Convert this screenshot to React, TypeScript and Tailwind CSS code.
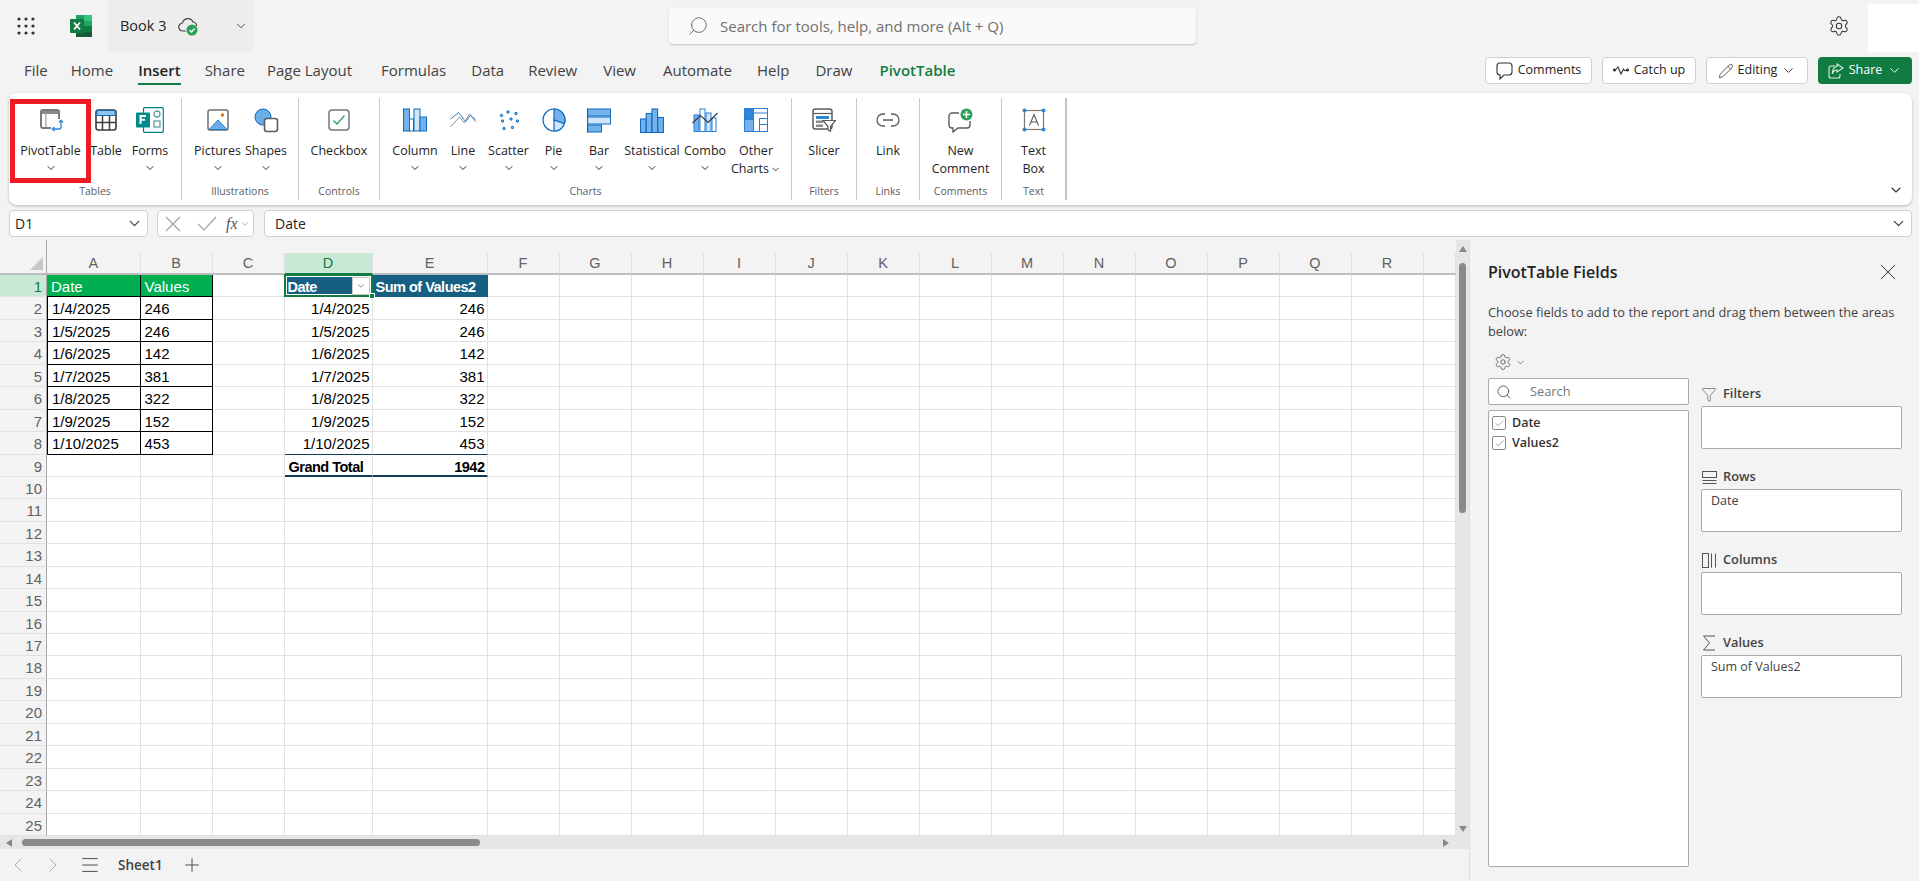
import React from "react";
import { ChevronDown, ChevronLeft, ChevronRight, Menu, Plus, Search, Settings, X, Check, Funnel, Pencil } from "lucide-react";

const blue = "#0f6cbd";
const lite = "#73b2ea";
const pale = "#cfe6fa";

const PivotIcon = () => (
  <svg width="26" height="26" viewBox="0 0 26 26" fill="none">
    <rect x="3" y="3" width="18" height="18" rx="2" stroke="#7a7a7a" strokeWidth="2" fill="#fff" />
    <rect x="4" y="4" width="16" height="3" fill="#8c8c8c" />
    <rect x="7" y="7" width="1.6" height="13" fill="#b5b5b5" />
    <rect x="13" y="12" width="13" height="14" fill="#fff" />
    <path d="M23 13.5v6.5a2 2 0 0 1-2 2h-6.5M21 15.5l2-2.2 2 2.2M16.5 20l-2.2 2 2.2 2" stroke="#2b88d8" strokeWidth="1.3" />
  </svg>
);
const TableIcon = () => (
  <svg width="22" height="22" viewBox="0 0 22 22" fill="none">
    <rect x="1" y="1" width="20" height="20" rx="2.5" fill="#fff" stroke="#3d3d3d" strokeWidth="1.6" />
    <path d="M1.8 2.5a1 1 0 0 1 1-1h16.4a1 1 0 0 1 1 1v4H1.8z" fill="#8fc3f0" stroke={blue} strokeWidth="1" />
    <path d="M1 13.5h20M7.5 7v14M14.5 7v14" stroke="#3d3d3d" strokeWidth="1.5" />
  </svg>
);
const FormsIcon = () => (
  <svg width="28" height="26" viewBox="0 0 28 26">
    <rect x="7.5" y="0.7" width="19.8" height="24.6" rx="1" fill="#fff" stroke="#038387" strokeWidth="1.2" />
    <circle cx="21" cy="7" r="3" fill="#fff" stroke="#5f9ea0" strokeWidth="1.3" />
    <rect x="18" y="14" width="6" height="6" fill="#fff" stroke="#5f9ea0" strokeWidth="1.3" />
    <rect x="0" y="5.5" width="14" height="15" rx="1" fill="#058a8c" />
    <path d="M4.5 17V9h5.5M4.5 12.8h4.5" stroke="#fff" strokeWidth="2" fill="none" />
  </svg>
);
const PicturesIcon = () => (
  <svg width="22" height="22" viewBox="0 0 22 22">
    <rect x="1" y="1" width="20" height="20" rx="2" fill="#fff" stroke="#6f6f6f" strokeWidth="1.5" />
    <path d="M2 20.5 11 11l9 9.5z" fill="#6aaee8" stroke={blue} strokeWidth="0.8" />
    <circle cx="15.5" cy="6" r="1.7" fill="#e8730c" />
  </svg>
);
const ShapesIcon = () => (
  <svg width="25" height="25" viewBox="0 0 25 25">
    <circle cx="9" cy="9" r="8" fill="#6aaee8" stroke={blue} strokeWidth="1" />
    <rect x="10.5" y="10.5" width="13" height="13" rx="2.5" fill="#fff" stroke="#5c5c5c" strokeWidth="1.6" />
  </svg>
);
const CheckboxIcon = () => (
  <svg width="22" height="22" viewBox="0 0 22 22" fill="none">
    <rect x="1" y="1" width="20" height="20" rx="3" fill="#fff" stroke="#757575" strokeWidth="1.5" />
    <path d="m5.5 11.5 3.5 3.5 7.5-8.5" stroke="#2aa05a" strokeWidth="1.2" />
  </svg>
);
const ColumnIcon = () => (
  <svg width="24" height="24" viewBox="0 0 24 24" stroke={blue} strokeWidth="1">
    <rect x="0.5" y="1" width="6" height="22" fill={lite} />
    <rect x="6.5" y="11" width="4" height="12" fill="#fff" />
    <rect x="11" y="1" width="6" height="22" fill={pale} />
    <rect x="17" y="9" width="6.5" height="14" fill={lite} />
  </svg>
);
const LineIcon = () => (
  <svg width="26" height="18" viewBox="0 0 26 18" fill="none">
    <path d="m0.5 16 9-10 5 6 5-9 6.5 8" stroke="#8a8a8a" strokeWidth="1" />
    <path d="m0.5 8 8-6.5 7 9 5-6 5 4" stroke={blue} strokeWidth="0.9" />
  </svg>
);
const ScatterIcon = () => (
  <svg width="20" height="22" viewBox="0 0 20 22" fill={lite} stroke={blue} strokeWidth="1">
    {[[2.5, 6.5], [9, 3], [17, 4.5], [12, 10], [3.5, 12], [18.5, 12], [5, 19.5], [13.5, 18.5]].map(([x, y]) => (
      <circle key={`${x}-${y}`} cx={x} cy={y} r="1.2" />
    ))}
  </svg>
);
const PieIcon = () => (
  <svg width="24" height="24" viewBox="0 0 24 24" stroke={blue} strokeWidth="1.2">
    <circle cx="12" cy="12" r="11" fill="#fff" />
    <path d="M12 1a11 11 0 0 1 10.3 14.7L12 12z" fill={lite} />
    <path d="m12 12 10.3 3.7A11 11 0 0 1 12 23z" fill={pale} />
  </svg>
);
const BarIcon = () => (
  <svg width="24" height="25" viewBox="0 0 24 25" stroke={blue} strokeWidth="1">
    <rect x="0.5" y="1" width="23" height="7" fill={lite} />
    <rect x="0.5" y="9" width="23" height="7" fill={pale} />
    <rect x="0.5" y="17" width="14" height="7" fill={lite} />
    <path d="M0.5 0.5v24" strokeWidth="1.4" />
  </svg>
);
const StatisticalIcon = () => (
  <svg width="24" height="25" viewBox="0 0 24 25" stroke={blue} strokeWidth="1.1">
    <rect x="0.5" y="11" width="5.6" height="13.5" fill={lite} />
    <rect x="6.2" y="5.5" width="5.6" height="19" fill={lite} />
    <rect x="12" y="1" width="5.6" height="23.5" fill={lite} />
    <rect x="17.8" y="9.5" width="5.6" height="15" fill={lite} />
  </svg>
);
const ComboIcon = () => (
  <svg width="26" height="24" viewBox="0 0 26 24" fill="none">
    <g stroke="#2b7cd3" strokeWidth="1">
      <rect x="2" y="7" width="5" height="16.5" fill={lite} />
      <rect x="8" y="1" width="5" height="22.5" fill="#fff" />
      <rect x="14" y="5" width="5" height="18.5" fill={pale} />
      <rect x="20" y="10" width="4" height="13.5" fill="#fff" />
    </g>
    <path d="m0.5 15 8-7.5 7.5 7 9.5-9.5" stroke="#3a3a3a" strokeWidth="1.1" />
  </svg>
);
const OtherIcon = () => (
  <svg width="24" height="24" viewBox="0 0 24 24" stroke="#2b7cd3" strokeWidth="1">
    <rect x="0.5" y="0.5" width="23" height="23" fill="#fff" />
    <rect x="0.5" y="0.5" width="9" height="11" fill="#2b88d8" />
    <rect x="0.5" y="11.5" width="9" height="12" fill={lite} />
    <path d="M9.5 5h14M15.5 10.5h8M15.5 10.5V23.5M15.5 16.5h8" />
  </svg>
);
const SlicerIcon = () => (
  <svg width="24" height="24" viewBox="0 0 24 24">
    <rect x="1" y="1" width="19" height="20" rx="2.5" fill="#fff" stroke="#5c5c5c" strokeWidth="1.5" />
    <path d="M1 5.5h19" stroke="#5c5c5c" strokeWidth="1.2" />
    <rect x="4" y="8" width="13" height="3" fill="#2b88d8" />
    <rect x="4" y="12.5" width="7" height="2.5" fill="#8a8a8a" />
    <rect x="4" y="16.5" width="7" height="2.5" fill="#8a8a8a" />
    <path d="M11 12.5h12.5l-5 6v5l-2.5-1.5v-3.5z" fill="#fff" stroke="#5c5c5c" strokeWidth="1.2" />
  </svg>
);
const LinkIcon = () => (
  <svg width="24" height="14" viewBox="0 0 24 14" fill="none" stroke="#5c5c5c" strokeWidth="1.3">
    <path d="M9 1H7a6 6 0 0 0 0 12h2M15 1h2a6 6 0 0 1 0 12h-2M7 7h10" />
  </svg>
);
const NewCommentIcon = () => (
  <svg width="25" height="25" viewBox="0 0 25 25" fill="none">
    <path d="M11 5H4a3 3 0 0 0-3 3v9a3 3 0 0 0 3 3h1v4l5-4h9a3 3 0 0 0 3-3v-4" stroke="#5c5c5c" strokeWidth="1.4" />
    <circle cx="18.5" cy="6.5" r="6" fill="#2aa05a" />
    <path d="M18.5 3v7M15 6.5h7" stroke="#fff" strokeWidth="1.5" />
  </svg>
);
const TextBoxIcon = () => (
  <svg width="24" height="24" viewBox="0 0 24 24" fill="none">
    <rect x="2.5" y="2.5" width="19" height="19" stroke="#7a7a7a" strokeWidth="1.2" />
    <path d="m7.5 17.5 4.5-11 4.5 11M9 14h6" stroke="#5c5c5c" strokeWidth="1.1" />
    {[[2.5, 2.5], [21.5, 2.5], [2.5, 21.5], [21.5, 21.5]].map(([x, y]) => (
      <circle key={`${x}-${y}`} cx={x} cy={y} r="2" fill="#2b88d8" />
    ))}
  </svg>
);

type RibbonItem = { w: string; lines: string[]; icon: React.ReactNode; chev?: boolean; inlineChev?: boolean };
type RibbonGroup = { label: string; w: string; cls: string; items: RibbonItem[] };

const groups: RibbonGroup[] = [
  {
    label: "Tables",
    w: "w-[173px]",
    cls: "pl-[5px]",
    items: [
      { w: "w-[73px]", lines: ["PivotTable"], icon: <PivotIcon />, chev: true },
      { w: "w-[38px]", lines: ["Table"], icon: <TableIcon /> },
      { w: "w-[50px]", lines: ["Forms"], icon: <FormsIcon />, chev: true },
    ],
  },
  {
    label: "Illustrations",
    w: "w-[117px]",
    cls: "pl-[8px]",
    items: [
      { w: "w-[55px]", lines: ["Pictures"], icon: <PicturesIcon />, chev: true },
      { w: "w-[42px]", lines: ["Shapes"], icon: <ShapesIcon />, chev: true },
    ],
  },
  { label: "Controls", w: "w-[81px]", cls: "justify-center", items: [{ w: "w-[70px]", lines: ["Checkbox"], icon: <CheckboxIcon /> }] },
  {
    label: "Charts",
    w: "w-[412px]",
    cls: "pl-[5px]",
    items: [
      { w: "w-[60px]", lines: ["Column"], icon: <ColumnIcon />, chev: true },
      { w: "w-[36px]", lines: ["Line"], icon: <LineIcon />, chev: true },
      { w: "w-[55px]", lines: ["Scatter"], icon: <ScatterIcon />, chev: true },
      { w: "w-[35px]", lines: ["Pie"], icon: <PieIcon />, chev: true },
      { w: "w-[56px]", lines: ["Bar"], icon: <BarIcon />, chev: true },
      { w: "w-[50px]", lines: ["Statistical"], icon: <StatisticalIcon />, chev: true },
      { w: "w-[56px]", lines: ["Combo"], icon: <ComboIcon />, chev: true },
      { w: "w-[46px]", lines: ["Other", "Charts"], icon: <OtherIcon />, inlineChev: true },
    ],
  },
  { label: "Filters", w: "w-[65px]", cls: "justify-center", items: [{ w: "w-[50px]", lines: ["Slicer"], icon: <SlicerIcon /> }] },
  { label: "Links", w: "w-[63px]", cls: "justify-center", items: [{ w: "w-[50px]", lines: ["Link"], icon: <LinkIcon /> }] },
  { label: "Comments", w: "w-[82px]", cls: "justify-center", items: [{ w: "w-[70px]", lines: ["New", "Comment"], icon: <NewCommentIcon /> }] },
  { label: "Text", w: "w-[65px]", cls: "justify-center", items: [{ w: "w-[50px]", lines: ["Text", "Box"], icon: <TextBoxIcon /> }] },
];

const tabs = [
  { name: "File", ml: "" },
  { name: "Home", ml: "ml-[23px]" },
  { name: "Insert", ml: "ml-[25px]" },
  { name: "Share", ml: "ml-[24px]" },
  { name: "Page Layout", ml: "ml-[22px]" },
  { name: "Formulas", ml: "ml-[29px]" },
  { name: "Data", ml: "ml-[25px]" },
  { name: "Review", ml: "ml-[24px]" },
  { name: "View", ml: "ml-[26px]" },
  { name: "Automate", ml: "ml-[27px]" },
  { name: "Help", ml: "ml-[25px]" },
  { name: "Draw", ml: "ml-[26px]" },
  { name: "PivotTable", ml: "ml-[27px]" },
];

// column widths of the sheet, first one is A
const columns = [
  { name: "A", w: "w-[93.5px]" },
  { name: "B", w: "w-[72px]" },
  { name: "C", w: "w-[72px]" },
  { name: "D", w: "w-[88px]" },
  { name: "E", w: "w-[115px]" },
  ...["F", "G", "H", "I", "J", "K", "L", "M", "N", "O", "P", "Q", "R"].map((name) => ({ name, w: "w-[72px]" })),
  { name: "", w: "w-[32.5px]" },
];

const source: [string, string][] = [
  ["1/4/2025", "246"],
  ["1/5/2025", "246"],
  ["1/6/2025", "142"],
  ["1/7/2025", "381"],
  ["1/8/2025", "322"],
  ["1/9/2025", "152"],
  ["1/10/2025", "453"],
];

const cellBase = "h-full shrink-0 border-r border-b border-[#e1e1e1] px-[4px] leading-[24px] whitespace-nowrap";

function cellFor(col: string, row: number): { text?: string; cls: string } {
  if (col === "A" || col === "B") {
    const i = col === "A" ? 0 : 1;
    if (row === 1) return { text: col === "A" ? "Date" : "Values", cls: "bg-[#00b050] text-white border-r-black border-b-black" };
    if (row <= 8) return { text: source[row - 2][i], cls: "text-black border-r-black border-b-black" };
  }
  if (col === "D" || col === "E") {
    if (row === 1) return { text: col === "D" ? "Date" : "Sum of Values2", cls: "bg-[#156082] text-white font-bold text-[14.5px] tracking-[-0.5px] border-r-[#156082] border-b-[#156082] !px-[3px]" };
    if (row <= 8) {
      const i = col === "D" ? 0 : 1;
      return {
        text: source[row - 2][i],
        cls: `text-black text-right !pr-[2px] ${row === 8 ? "border-b-[#0e3f56]" : ""}`,
      };
    }
    if (row === 9) {
      return {
        text: col === "D" ? "Grand Total" : "1942",
        cls: `text-black font-bold text-[14.5px] tracking-[-0.5px] border-b-2 border-b-[#0e3f56] !pr-[2px] ${col === "E" ? "text-right" : ""}`,
      };
    }
  }
  return { cls: "" };
}

const RibbonButton = ({ item }: { item: RibbonItem }) => (
  <div className={`${item.w} flex flex-col items-center shrink-0`}>
    <div className="h-[28px] flex items-center justify-center">{item.icon}</div>
    <div className="mt-[8px] text-[12.5px] leading-[18px] text-[#242424] text-center whitespace-nowrap">
      {item.lines.map((line, i) => (
        <div key={line} className="flex items-center justify-center gap-[1px]">
          {line}
          {item.inlineChev && i === 1 && <ChevronDown size={11} strokeWidth={2} className="text-[#333]" />}
        </div>
      ))}
    </div>
    {item.chev && <ChevronDown size={12} strokeWidth={2} className="mt-[2px] text-[#333]" />}
  </div>
);

const Ribbon = () => (
  <div className="relative ml-[9px] mr-[7px] h-[112px] bg-white rounded-lg shadow-[0_1px_3px_rgba(0,0,0,0.25)] flex py-[5px]">
    {groups.map((g, i) => (
      <div key={g.label} className={`${g.w} flex flex-col shrink-0 ${i === groups.length - 1 ? "border-r-2 border-[#c4c4c4]" : "border-r border-[#c9c9c9]"}`}>
        <div className={`h-[84px] pt-[8px] flex ${g.cls}`}>
          {g.items.map((item) => (
            <RibbonButton key={item.lines.join(" ")} item={item} />
          ))}
        </div>
        <div className="text-[10.5px] leading-[18px] text-[#5c5c5c] text-center">{g.label}</div>
      </div>
    ))}
    <ChevronDown size={16} strokeWidth={1.6} className="absolute right-[8px] bottom-[7px] text-[#333]" />
    {/* red callout round the PivotTable button */}
    <div className="absolute left-[1px] top-[6px] w-[81px] h-[84px] border-[5px] border-[#ed1c24]" />
  </div>
);

const Sheet = () => (
  <div className="h-[596px] overflow-hidden bg-white font-['Liberation_Sans',sans-serif] text-[15px]">
    <div className="h-[35px] flex bg-[#f3f3f3]">
      <div className="relative w-[47px] shrink-0 border-r border-b-2 border-[#a8a8a8] border-b-[#bdbdbd]">
        <div className="absolute right-[3px] bottom-[3px] w-0 h-0 border-l-[13px] border-l-transparent border-b-[13px] border-b-[#c8c8c8]" />
      </div>
      {columns.map((c) => (
        <div key={c.name || "end"} className={`${c.w} shrink-0 h-[35px] pt-[13px]`}>
          <div
            className={`h-[22px] text-center text-[14.5px] leading-[21px] border-r border-b-2 border-r-[#e1e1e1] ${
              c.name === "D" ? "bg-[#c9e9d6] text-[#107c41] border-b-[#107c41]" : "text-[#616161] border-b-[#bdbdbd]"
            }`}
          >
            {c.name}
          </div>
        </div>
      ))}
    </div>
    {Array.from({ length: 25 }, (_, idx) => idx + 1).map((row) => (
      <div key={row} className="h-[22.44px] flex">
        <div
          className={`w-[47px] shrink-0 h-full border-r border-r-[#a8a8a8] border-b border-b-[#e1e1e1] text-right pr-[4px] leading-[24px] ${
            row === 1 ? "bg-[#c9e9d6] text-[#107c41]" : "bg-[#f3f3f3] text-[#616161]"
          }`}
        >
          {row}
        </div>
        {columns.map((c) => {
          const cell = cellFor(c.name, row);
          return (
            <div key={c.name || "end"} className={`relative ${c.w} ${cellBase} ${cell.cls} ${c.name === "A" && row <= 8 && row > 1 ? "border-l border-l-black" : ""}`}>
              {cell.text}
              {c.name === "D" && row === 1 && (
                <div className="absolute z-10 -left-px -top-px -right-px -bottom-px border-2 border-[#107c41]">
                  <div className="w-full h-full border border-white" />
                  <div className="absolute right-[1px] top-[1px] w-[18px] h-[18px] bg-white border border-[#c8c8c8] flex items-center justify-center">
                    <ChevronDown size={10} className="text-[#757575]" />
                  </div>
                  <div className="absolute -right-[4px] -bottom-[4px] w-[6px] h-[6px] bg-[#107c41] border border-white" />
                </div>
              )}
            </div>
          );
        })}
      </div>
    ))}
  </div>
);

const FieldArea = ({ icon, label, value }: { icon: React.ReactNode; label: string; value?: string }) => (
  <div>
    <div className="h-[24px] flex items-center gap-[6px]">
      <div className="w-[16px] h-[16px] flex items-center justify-center text-[#555]">{icon}</div>
      <span className="text-[12.8px] font-semibold text-[#424242]">{label}</span>
    </div>
    <div className="h-[43px] bg-white border border-[#aaaaaa] rounded-[2px] pl-[9px] text-[12.5px] leading-[21px] text-[#424242]">{value}</div>
  </div>
);

const FieldRow = ({ label }: { label: string }) => (
  <div className="h-[20px] flex items-center gap-[6px] pl-[3px]">
    <div className="w-[14px] h-[14px] border border-[#8a8a8a] rounded-[2px] flex items-center justify-center">
      <Check size={11} strokeWidth={1.2} className="text-[#616161]" />
    </div>
    <span className="text-[12.5px] font-semibold text-[#333]">{label}</span>
  </div>
);

const PivotPanel = () => (
  <div className="flex-1 border-l border-[#dedede] pl-[18px] pr-[17px] relative">
    <div className="h-[63px] flex items-center pt-[1px] justify-between">
      <span className="text-[16px] font-semibold text-[#242424]">PivotTable Fields</span>
      <X size={26} strokeWidth={0.9} className="text-[#333] mr-[1px]" />
    </div>
    <p className="text-[12.8px] leading-[19px] text-[#424242] whitespace-pre-line">{"Choose fields to add to the report and drag them between the areas\nbelow:"}</p>
    <div className="h-[30px] mt-[6px] pl-[6px] flex items-center gap-[3px] text-[#555]">
      <Settings size={18} strokeWidth={1.1} />
      <ChevronDown size={11} strokeWidth={1.5} />
    </div>
    <div className="flex gap-[12px] mt-[1px]">
      <div className="w-[201px]">
        <div className="h-[27px] bg-white border border-[#aaaaaa] rounded-[2px] flex items-center pl-[7px]">
          <Search size={16} strokeWidth={1.2} className="text-[#424242]" />
          <span className="ml-[18px] text-[12.8px] text-[#767676]">Search</span>
        </div>
        <div className="h-[457px] mt-[5px] bg-white border border-[#aaaaaa] rounded-[2px] pt-[2px]">
          <FieldRow label="Date" />
          <FieldRow label="Values2" />
        </div>
      </div>
      <div className="w-[201px] flex flex-col gap-[16px] mt-[4px]">
        <FieldArea label="Filters" icon={<Funnel size={17} strokeWidth={1} />} />
        <FieldArea
          label="Rows"
          value="Date"
          icon={
            <svg width="15" height="15" viewBox="0 0 15 15" fill="none" stroke="currentColor" strokeWidth="1">
              <rect x="0.5" y="1.5" width="14" height="6" />
              <path d="M0.5 10.5h14M0.5 13.5h14" />
            </svg>
          }
        />
        <FieldArea
          label="Columns"
          icon={
            <svg width="15" height="15" viewBox="0 0 15 15" fill="none" stroke="currentColor" strokeWidth="1">
              <rect x="0.5" y="0.5" width="6" height="14" />
              <path d="M9.5 0.5v14M13.5 0.5v14" />
            </svg>
          }
        />
        <FieldArea
          label="Values"
          value="Sum of Values2"
          icon={
            <svg width="14" height="16" viewBox="0 0 14 16" fill="none" stroke="currentColor" strokeWidth="1">
              <path d="M13 1H1.5L7.5 8l-6 7H13" />
            </svg>
          }
        />
      </div>
    </div>
  </div>
);

export default function App() {
  return (
    <div className="w-full h-screen overflow-hidden bg-[#f3f3f3] flex flex-col font-['Open_Sans',sans-serif] text-[#242424]">
      {/* title bar */}
      <div className="h-[52px] flex items-center shrink-0 relative">
        <svg className="ml-[17px] shrink-0" width="18" height="18" viewBox="0 0 18 18" fill="#333">
          {[2, 9, 16].flatMap((y) => [2, 9, 16].map((x) => <circle key={`${x}-${y}`} cx={x} cy={y} r="1.6" />))}
        </svg>
        <svg className="ml-[35px] shrink-0" width="22" height="22" viewBox="0 0 22 22">
          <rect x="6" y="0" width="16" height="22" rx="1" fill="#21a366" />
          <rect x="14" y="0" width="8" height="6" fill="#33c481" />
          <rect x="6" y="11" width="16" height="11" fill="#185c37" />
          <rect x="14" y="11" width="8" height="6" fill="#107c41" />
          <rect x="0" y="4" width="14" height="14" rx="1" fill="#107c41" />
          <path d="m4 7.5 6 7M10 7.5l-6 7" stroke="#fff" strokeWidth="1.7" />
        </svg>
        <div className="ml-[16px] w-[146px] h-[52px] bg-[#ededed] rounded-b-md flex items-center pl-[12px] shrink-0">
          <span className="text-[14.5px] text-[#242424]">Book 3</span>
          <svg className="ml-[11px]" width="21" height="20" viewBox="0 0 21 20" fill="none">
            <path d="M8 15H5a4 4 0 0 1-.5-8 5.5 5.5 0 0 1 10.5-1 4 4 0 0 1 3.5 4" stroke="#424242" strokeWidth="1.2" />
            <circle cx="14" cy="14" r="5.5" fill="#2aa05a" />
            <path d="m11.5 14 2 2 3-3.5" stroke="#fff" strokeWidth="1.2" />
          </svg>
          <ChevronDown size={14} strokeWidth={1.5} className="ml-[35px] text-[#424242]" />
        </div>
        <div className="ml-[415px] w-[527px] h-[36px] bg-[#fafafa] rounded-[4px] shadow-[0_1px_2px_rgba(0,0,0,0.2)] flex items-center pl-[18px] shrink-0">
          <Search size={22} strokeWidth={1} className="text-[#616161] -scale-x-100" />
          <span className="ml-[11px] text-[15px] text-[#707070]">Search for tools, help, and more (Alt + Q)</span>
        </div>
        <Settings size={22} strokeWidth={1.1} className="ml-[632px] text-[#333] shrink-0" />
        <div className="absolute right-0 top-[4px] w-[51px] h-[48px] bg-white" />
      </div>

      {/* tabs and actions */}
      <div className="h-[41px] flex items-start shrink-0 pl-[24px] pr-[7px]">
        <div className="flex mt-[7px]">
          {tabs.map((t) => (
            <div
              key={t.name}
              className={`relative ${t.ml} text-[15px] leading-[22px] ${
                t.name === "Insert" ? "font-semibold" : t.name === "PivotTable" ? "font-semibold text-[#107c41]" : "text-[#424242]"
              }`}
            >
              {t.name}
              {t.name === "Insert" && <div className="absolute left-0 right-0 top-[24px] h-[2px] bg-[#107c41]" />}
            </div>
          ))}
        </div>
        <div className="ml-auto mt-[5px] flex gap-[10px] text-[12.5px]">
          <div className="w-[107px] h-[27px] bg-white border border-[#d1d1d1] rounded-[4px] flex items-center justify-center gap-[5px]">
            <svg width="17" height="18" viewBox="0 0 17 18" fill="none" stroke="#333" strokeWidth="1.1">
              <path d="M4 1h9a3 3 0 0 1 3 3v6a3 3 0 0 1-3 3H8l-4 4v-4a3 3 0 0 1-3-3V4a3 3 0 0 1 3-3z" />
            </svg>
            Comments
          </div>
          <div className="w-[94px] h-[27px] bg-white border border-[#d1d1d1] rounded-[4px] flex items-center justify-center gap-[5px]">
            <svg width="16" height="10" viewBox="0 0 16 10" fill="none" stroke="#333" strokeWidth="1.1">
              <circle cx="1.5" cy="4" r="1" fill="#333" />
              <circle cx="14.5" cy="4" r="1" fill="#333" />
              <path d="M2.5 4 5 1l3 7 2.5-5 1 1.5h2" />
            </svg>
            Catch up
          </div>
          <div className="w-[102px] h-[27px] bg-white border border-[#d1d1d1] rounded-[4px] flex items-center justify-center gap-[4px]">
            <Pencil size={16} strokeWidth={1.1} />
            Editing
            <ChevronDown size={15} strokeWidth={1.5} className="text-[#333]" />
          </div>
          <div className="w-[94px] h-[27px] bg-[#107c41] rounded-[4px] flex items-center justify-center gap-[5px] text-white">
            <svg width="16" height="16" viewBox="0 0 16 16" fill="none" stroke="#d7efe1" strokeWidth="1.1">
              <path d="M7 3H3a2 2 0 0 0-2 2v8a2 2 0 0 0 2 2h7a2 2 0 0 0 2-2v-2M9 1l6 4-6 4V7C7 7 5 8 4.5 11 4 7 6 3.5 9 3.5z" />
            </svg>
            Share
            <ChevronDown size={15} strokeWidth={1.5} />
          </div>
        </div>
      </div>

      <Ribbon />

      {/* formula bar */}
      <div className="h-[27px] mt-[5px] ml-[9px] mr-[7px] flex gap-[10px] shrink-0 text-[14px]">
        <div className="w-[139px] bg-white border border-[#d1d1d1] rounded-[4px] flex items-center justify-between pl-[5px] pr-[4px]">
          D1
          <ChevronDown size={17} strokeWidth={1.6} className="text-[#333]" />
        </div>
        <div className="w-[97px] -ml-[1px] bg-white border border-[#d1d1d1] rounded-[4px] flex items-center pl-[7px]">
          <svg width="16" height="16" viewBox="0 0 16 16" fill="none" stroke="#a3a3a3" strokeWidth="1.2">
            <path d="M1 1l14 14M15 1 1 15" />
          </svg>
          <svg className="ml-[16px]" width="20" height="15" viewBox="0 0 20 15" fill="none" stroke="#a3a3a3" strokeWidth="1.2">
            <path d="M1 8l6 6L19 1" />
          </svg>
          <span className="ml-[9px] font-['Liberation_Serif',serif] italic text-[16px] text-[#555]">fx</span>
          <ChevronDown size={10} className="ml-[2px] text-[#a3a3a3]" />
        </div>
        <div className="flex-1 bg-white border border-[#d1d1d1] rounded-[4px] flex items-center justify-between pl-[10px] pr-[4px]">
          Date
          <ChevronDown size={17} strokeWidth={1.6} className="text-[#333]" />
        </div>
      </div>

      {/* sheet and pivot panel */}
      <div className="flex-1 mt-[3px] flex min-h-0">
        <div className="w-[1469px] shrink-0 flex flex-col">
          <div className="flex">
            <div className="w-[1456px] shrink-0">
              <Sheet />
            </div>
            <div className="w-[13px] h-[596px] bg-[#e6e6e6] flex flex-col items-center relative">
              <div className="absolute top-[6px] w-0 h-0 border-x-[4px] border-x-transparent border-b-[6px] border-b-[#888]" />
              <div className="mt-[23px] w-[7px] h-[250px] rounded-full bg-[#8a8a8a]" />
              <div className="absolute bottom-[4px] w-0 h-0 border-x-[4px] border-x-transparent border-t-[6px] border-t-[#888]" />
            </div>
          </div>
          <div className="h-[13px] bg-[#e6e6e6] flex items-center relative">
            <div className="absolute left-[6px] w-0 h-0 border-y-[4px] border-y-transparent border-r-[6px] border-r-[#888]" />
            <div className="ml-[22px] w-[458px] h-[7px] rounded-full bg-[#8a8a8a]" />
            <div className="absolute left-[1443px] w-0 h-0 border-y-[4px] border-y-transparent border-l-[6px] border-l-[#888]" />
          </div>
          <div className="flex-1 flex items-center pl-[6px] text-[#424242]">
            <ChevronLeft size={24} strokeWidth={0.9} className="text-[#a8a8a8]" />
            <ChevronRight size={24} strokeWidth={0.9} className="ml-[11px] text-[#a8a8a8]" />
            <Menu size={22} strokeWidth={1} className="ml-[14px]" />
            <span className="ml-[17px] text-[13.5px] font-semibold">Sheet1</span>
            <Plus size={22} strokeWidth={1} className="ml-[18px]" />
          </div>
        </div>
        <PivotPanel />
      </div>
    </div>
  );
}
